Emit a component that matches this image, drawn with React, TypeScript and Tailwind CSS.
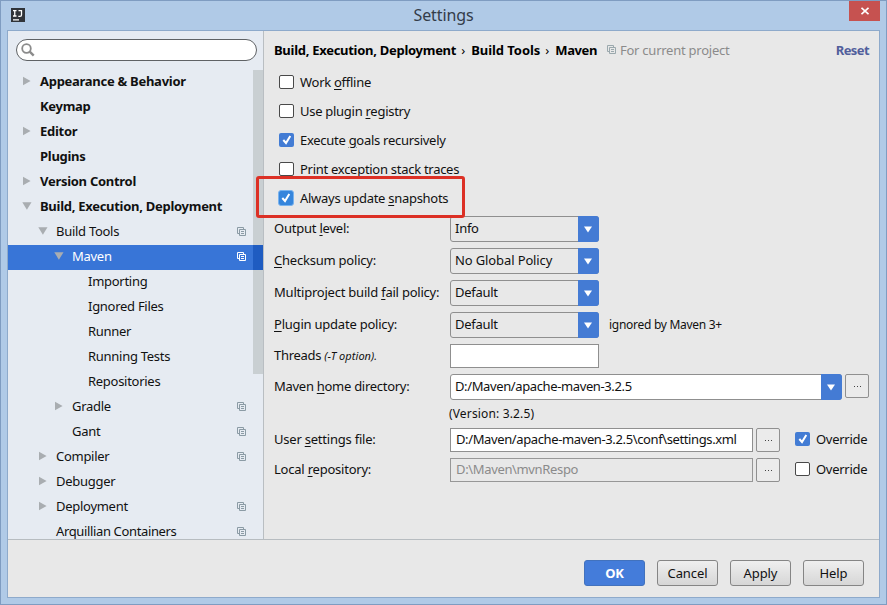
import React from "react";

type TreeItem = {
  label: string;
  depth: number;
  state?: "open" | "closed";
  bold?: boolean;
  project?: boolean;
  selected?: boolean;
};

const items: TreeItem[] = [
  { label: "Appearance & Behavior", depth: 0, state: "closed", bold: true },
  { label: "Keymap", depth: 0, bold: true },
  { label: "Editor", depth: 0, state: "closed", bold: true },
  { label: "Plugins", depth: 0, bold: true },
  { label: "Version Control", depth: 0, state: "closed", bold: true },
  { label: "Build, Execution, Deployment", depth: 0, state: "open", bold: true },
  { label: "Build Tools", depth: 1, state: "open", project: true },
  { label: "Maven", depth: 2, state: "open", project: true, selected: true },
  { label: "Importing", depth: 3 },
  { label: "Ignored Files", depth: 3 },
  { label: "Runner", depth: 3 },
  { label: "Running Tests", depth: 3 },
  { label: "Repositories", depth: 3 },
  { label: "Gradle", depth: 2, state: "closed", project: true },
  { label: "Gant", depth: 2, project: true },
  { label: "Compiler", depth: 1, state: "closed", project: true },
  { label: "Debugger", depth: 1, state: "closed" },
  { label: "Deployment", depth: 1, state: "closed", project: true },
  { label: "Arquillian Containers", depth: 1, project: true },
];

const indents = ["pl-[14px]", "pl-[30px]", "pl-[46px]", "pl-[62px]"];

function ProjectIcon({ className }: { className: string }) {
  return (
    <svg width="10" height="10" viewBox="0 0 10 10" fill="none" stroke="currentColor" className={`shrink-0 ${className}`}>
      <path d="M2.5 6.5H.5v-6h6v2" />
      <path d="M2.5 2.5h6v6h-6zM4 4.5h3M4 6.5h3" />
    </svg>
  );
}

function Arrow({ state }: { state?: "open" | "closed" }) {
  return (
    <svg width="10" height="10" viewBox="0 0 10 10" className="shrink-0 text-[#a9adb1]" fill="currentColor">
      {state === "closed" && <path d="M1 .8 8.6 5 1 9.2z" />}
      {state === "open" && <path d="M.3 1.2h9.2L4.9 8.8z" />}
    </svg>
  );
}

function Mnemonic({ text }: { text: string }) {
  const [before, rest] = text.split("_");
  if (!rest) return <>{text}</>;
  return (
    <>
      {before}
      <span className="underline decoration-1 underline-offset-2">{rest[0]}</span>
      {rest.slice(1)}
    </>
  );
}

function Check({ label, checked, focused }: { label: string; checked?: boolean; focused?: boolean }) {
  return (
    <div className="flex h-[29px] items-center gap-1.5 pb-[2px]">
      {checked ? (
        <span
          className={
            focused
              ? "-ml-px flex h-4 w-[16px] shrink-0 items-center justify-center rounded-[3px] border border-[#79b3ee] bg-[#3585dc]"
              : "flex h-[14px] w-[15px] shrink-0 items-center justify-center rounded-[2px] bg-[#437cd4]"
          }
        >
          <svg width="10" height="10" viewBox="0 0 10 10" fill="none" stroke="white" strokeWidth="2">
            <path d="M1.3 5 4 8 8.3 1" />
          </svg>
        </span>
      ) : (
        <span className="h-[14px] w-[15px] shrink-0 rounded-[2px] border border-[#494949] bg-white" />
      )}
      <span className="whitespace-nowrap">
        <Mnemonic text={label} />
      </span>
    </div>
  );
}

function DropButton() {
  return (
    <span className="-my-px -mr-px flex w-[21px] shrink-0 items-center justify-center rounded-r-[3px] bg-[#447bd4]">
      <svg width="8" height="7" viewBox="0 0 8 7" fill="white" className="mr-px">
        <path d="M0 .4h8L4 6.6z" />
      </svg>
    </span>
  );
}

function Combo({ value, className }: { value: string; className: string }) {
  return (
    <div className={`flex h-[26px] items-stretch rounded-[3px] border border-[#8f8f8f] ${className}`}>
      <span className="flex-1 self-center whitespace-nowrap pb-[2px] pl-1">{value}</span>
      <DropButton />
    </div>
  );
}

function Label({ text }: { text: string }) {
  return (
    <span className="w-[176px] shrink-0 whitespace-nowrap pb-[2px] tracking-[-0.22px]">
      <Mnemonic text={text} />
    </span>
  );
}

function Browse() {
  return (
    <span className="flex h-[24px] w-6 shrink-0 items-center justify-center gap-[2px] rounded-[2px] border border-[#909090] bg-[#ebebeb]">
      <i className="size-px bg-[#444]" />
      <i className="size-px bg-[#444]" />
      <i className="size-px bg-[#444]" />
    </span>
  );
}

function Button({ label, className }: { label: string; className: string }) {
  return (
    <button className={`flex h-[26px] w-[61px] items-center justify-center rounded-[3px] border pb-px ${className}`}>{label}</button>
  );
}

const plain = "border-[#858585] bg-linear-to-b from-[#efefef] to-[#d6d6d6] tracking-[-0.1px]";

export default function App() {
  return (
    <div className="flex h-[605px] w-[887px] flex-col overflow-hidden border border-[#7f9cc1] bg-[#b0cae7] font-['Noto_Sans',sans-serif] text-[13px] leading-[18px] tracking-[-0.28px] text-[#111]">
      <header className="relative flex h-[29px] shrink-0 items-center justify-center pb-[2px] text-[16px] tracking-[-0.1px] text-[#333c49]">
        <svg width="14" height="14" viewBox="0 0 14 14" className="absolute left-[10px] top-[7px]">
          <path d="M0 0h14v14H0z" fill="#30343a" />
          <path d="M2 2.7h3.5M3.75 2.7V8M2 8h3.5M7.5 2.7h3V7q0 1.3-1.5 1.3H7.3M2 11.9h6" stroke="white" strokeWidth="1.3" fill="none" />
        </svg>
        <span>Settings</span>
        <span className="absolute right-[6px] top-0 flex h-5 w-[31px] items-center justify-center bg-[#c65250]">
          <svg width="8" height="8" viewBox="0 0 8 8" stroke="white" strokeWidth="1.7">
            <path d="m.5.8 7 6.4m0-6.4-7 6.4" />
          </svg>
        </span>
      </header>
      <div className="mx-[6px] mb-[6px] flex flex-1 flex-col border border-[#8eaacb] bg-[#e8e8e8]">
        <div className="flex h-[509px] shrink-0 border-b border-[#b7bcc0]">
          <aside className="flex w-[256px] shrink-0 flex-col border-r border-[#b9bec2] bg-[#e6ebf2]">
            <div className="flex h-[39px] shrink-0 pl-2 pt-2">
              <div className="flex h-[22px] w-[241px] items-center rounded-full border border-[#5f6265] bg-white pl-1">
                <svg width="14" height="14" viewBox="0 0 14 14" fill="none" stroke="#8b8b8b">
                  <circle cx="5.5" cy="5.5" r="4.3" strokeWidth="1.8" />
                  <path d="m8.7 8.7 4 4" strokeWidth="2.4" />
                </svg>
              </div>
            </div>
            <div className="relative h-[469px]">
              {items.map((item) => (
                <div
                  key={item.label}
                  className={`flex items-center ${item.label === "Arquillian Containers" ? "h-[19px] pt-[3px] tracking-[-0.36px]" : "h-[25px] pb-[3px]"} ${indents[item.depth]} ${item.selected ? "bg-[#3875d7] text-white" : ""}`}
                >
                  <Arrow state={item.state} />
                  <span className={`ml-2 flex-1 whitespace-nowrap ${item.bold ? "font-bold" : ""}`}>{item.label}</span>
                  {item.project && (
                    <ProjectIcon className={item.selected ? "mr-4 mt-px text-white" : "mr-4 mt-px text-[#8b9ba5]"} />
                  )}
                </div>
              ))}
              <div className="absolute right-0 top-0 h-[304px] w-[10px] bg-[#c9cfd2]" />
              <div className="absolute right-0 top-[175px] h-[25px] w-[10px] bg-[#1f5cc1]" />
            </div>
          </aside>
          <main className="relative flex flex-1 flex-col pl-[10px]">
            <div className="flex h-[37px] shrink-0 items-center pr-[10px] text-black">
              <span className="flex items-center gap-[5px] whitespace-nowrap font-bold">
                <span>Build, Execution, Deployment</span>
                <span className="w-[5px] font-normal">›</span>
                <span className="tracking-[-0.05px]">Build Tools</span>
                <span className="w-[5px] font-normal">›</span>
                <span className="tracking-[-0.4px]">Maven</span>
              </span>
              <ProjectIcon className="ml-[10px] text-[#9aa8ad]" />
              <span className="ml-[3px] flex-1 tracking-[-0.25px] text-[#8b8b8b]">For current project</span>
              <span className="font-bold tracking-[-0.6px] text-[#515f9c]">Reset</span>
            </div>
            <div className="pl-[5px]">
              <Check label="Work _offline" />
              <Check label="Use plugin _registry" />
              <Check label="Execute _goals recursively" checked />
              <Check label="Print _exception stack traces" />
              <Check label="Always update _snapshots" checked focused />
            </div>
            <div className="mt-[3px] flex flex-col gap-[6px]">
              <div className="flex items-center">
                <Label text="Output _level:" />
                <Combo value="Info" className="w-[149px]" />
              </div>
              <div className="flex items-center">
                <Label text="_Checksum policy:" />
                <Combo value="No Global Policy" className="w-[149px] tracking-[-0.12px]" />
              </div>
              <div className="flex items-center">
                <Label text="Multiproject build _fail policy:" />
                <Combo value="Default" className="w-[149px]" />
              </div>
              <div className="flex items-center">
                <Label text="_Plugin update policy:" />
                <Combo value="Default" className="w-[149px]" />
                <span className="ml-[10px] text-[12px]">ignored by Maven 3+</span>
              </div>
              <div className="flex items-center">
                <span className="w-[176px] whitespace-nowrap pb-[2px]">
                  Threads <span className="text-[11px] italic tracking-[0.05px]">(-T option).</span>
                </span>
                <div className="h-6 w-[149px] border border-[#8f8f8f] bg-white" />
              </div>
              <div className="flex items-start">
                <span className="w-[176px] pt-[3px]">
                  <Mnemonic text="Maven _home directory:" />
                </span>
                <Combo value="D:/Maven/apache-maven-3.2.5" className="w-[392px] bg-white tracking-[-0.38px]" />
                <span className="ml-[3px]">
                  <Browse />
                </span>
              </div>
            </div>
            <div className="flex h-7 items-center pl-[175px] text-[12px] tracking-[0.15px]">(Version: 3.2.5)</div>
            <div className="flex flex-col gap-[6px]">
              <div className="flex h-6 items-center">
                <Label text="User _settings file:" />
                <div className="mr-[3px] flex h-6 w-[303px] items-center whitespace-nowrap border border-[#8f8f8f] bg-white pb-[2px] pl-[5px] tracking-[-0.38px]">
                  D:/Maven/apache-maven-3.2.5\conf\settings.xml
                </div>
                <Browse />
                <div className="ml-[15px]">
                  <Check label="Override" checked />
                </div>
              </div>
              <div className="flex h-6 items-center">
                <Label text="Local _repository:" />
                <div className="mr-[3px] flex h-6 w-[303px] items-center border border-[#979797] pb-[2px] pl-[5px] tracking-[-0.35px] text-[#8b8b8b]">
                  D:\Maven\mvnRespo
                </div>
                <Browse />
                <div className="ml-[15px]">
                  <Check label="Override" />
                </div>
              </div>
            </div>
            <div className="absolute left-[-8px] top-[145px] h-[42px] w-[209px] rounded-[3px] border-[3px] border-[#dc3025]" />
          </main>
        </div>
        <footer className="flex flex-1 items-center justify-end gap-3 pb-px pr-[15px] pt-[10px]">
          <Button label="OK" className="border-[#4272bd] bg-[#447cda] font-bold text-white" />
          <Button label="Cancel" className={plain} />
          <Button label="Apply" className={plain} />
          <Button label="Help" className={plain} />
        </footer>
      </div>
    </div>
  );
}
